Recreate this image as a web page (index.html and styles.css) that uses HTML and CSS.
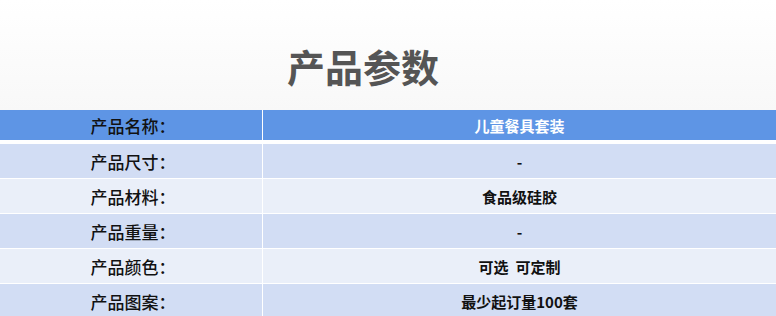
FILE: index.html
```html
<!DOCTYPE html>
<html lang="zh">
<head>
<meta charset="utf-8">
<link rel="stylesheet" href="styles.css">
</head>
<body>
<div class="page">
  <div class="hero">
    <h1 class="title">产品参数</h1>
  </div>
  <div class="table">
    <div class="row head">
      <div class="cell label">产品名称：</div>
      <div class="cell value">儿童餐具套装</div>
    </div>
    <div class="row dark">
      <div class="cell label">产品尺寸：</div>
      <div class="cell value">-</div>
    </div>
    <div class="row light">
      <div class="cell label">产品材料：</div>
      <div class="cell value">食品级硅胶</div>
    </div>
    <div class="row dark">
      <div class="cell label">产品重量：</div>
      <div class="cell value">-</div>
    </div>
    <div class="row light">
      <div class="cell label">产品颜色：</div>
      <div class="cell value">可选&nbsp;&nbsp;可定制</div>
    </div>
    <div class="row dark">
      <div class="cell label">产品图案：</div>
      <div class="cell value">最少起订量100套</div>
    </div>
  </div>
</div>
</body>
</html>
```

FILE: styles.css
```css
html, body {
  margin: 0;
  padding: 0;
  background: #ffffff;
}
.page {
  width: 776px;
  font-family: "Noto Sans CJK SC", "Noto Sans", sans-serif;
}
.hero {
  height: 110px;
  background: linear-gradient(#ffffff, #f8f8f8);
  box-sizing: border-box;
  padding-top: 44px;
}
.title {
  margin: 0;
  padding-right: 50px;
  text-align: center;
  font-size: 38px;
  line-height: 44px;
  font-weight: 700;
  color: #555555;
  letter-spacing: 0;
}
.table {
  background: #ffffff;
}
.row {
  display: flex;
  height: 34px;
  border-top: 1px solid #ffffff;
}
.row.head {
  height: 30px;
  border-top: 0;
  margin-bottom: 3px;
  background: #5e95e5;
}
.row.dark { background: #d2ddf4; }
.row.light { background: #eaeff9; }
.cell {
  display: flex;
  align-items: center;
  justify-content: center;
}
.label {
  width: 263px;
  border-right: 1px solid #ffffff;
  font-size: 17px;
  font-weight: 500;
  color: #111111;
  padding-left: 4px;
  box-sizing: border-box;
}
.value {
  flex: 1;
  font-size: 15px;
  font-weight: 700;
  color: #111111;
}
.head .value { color: #ffffff; }
.head .label { color: #111111; }
```
